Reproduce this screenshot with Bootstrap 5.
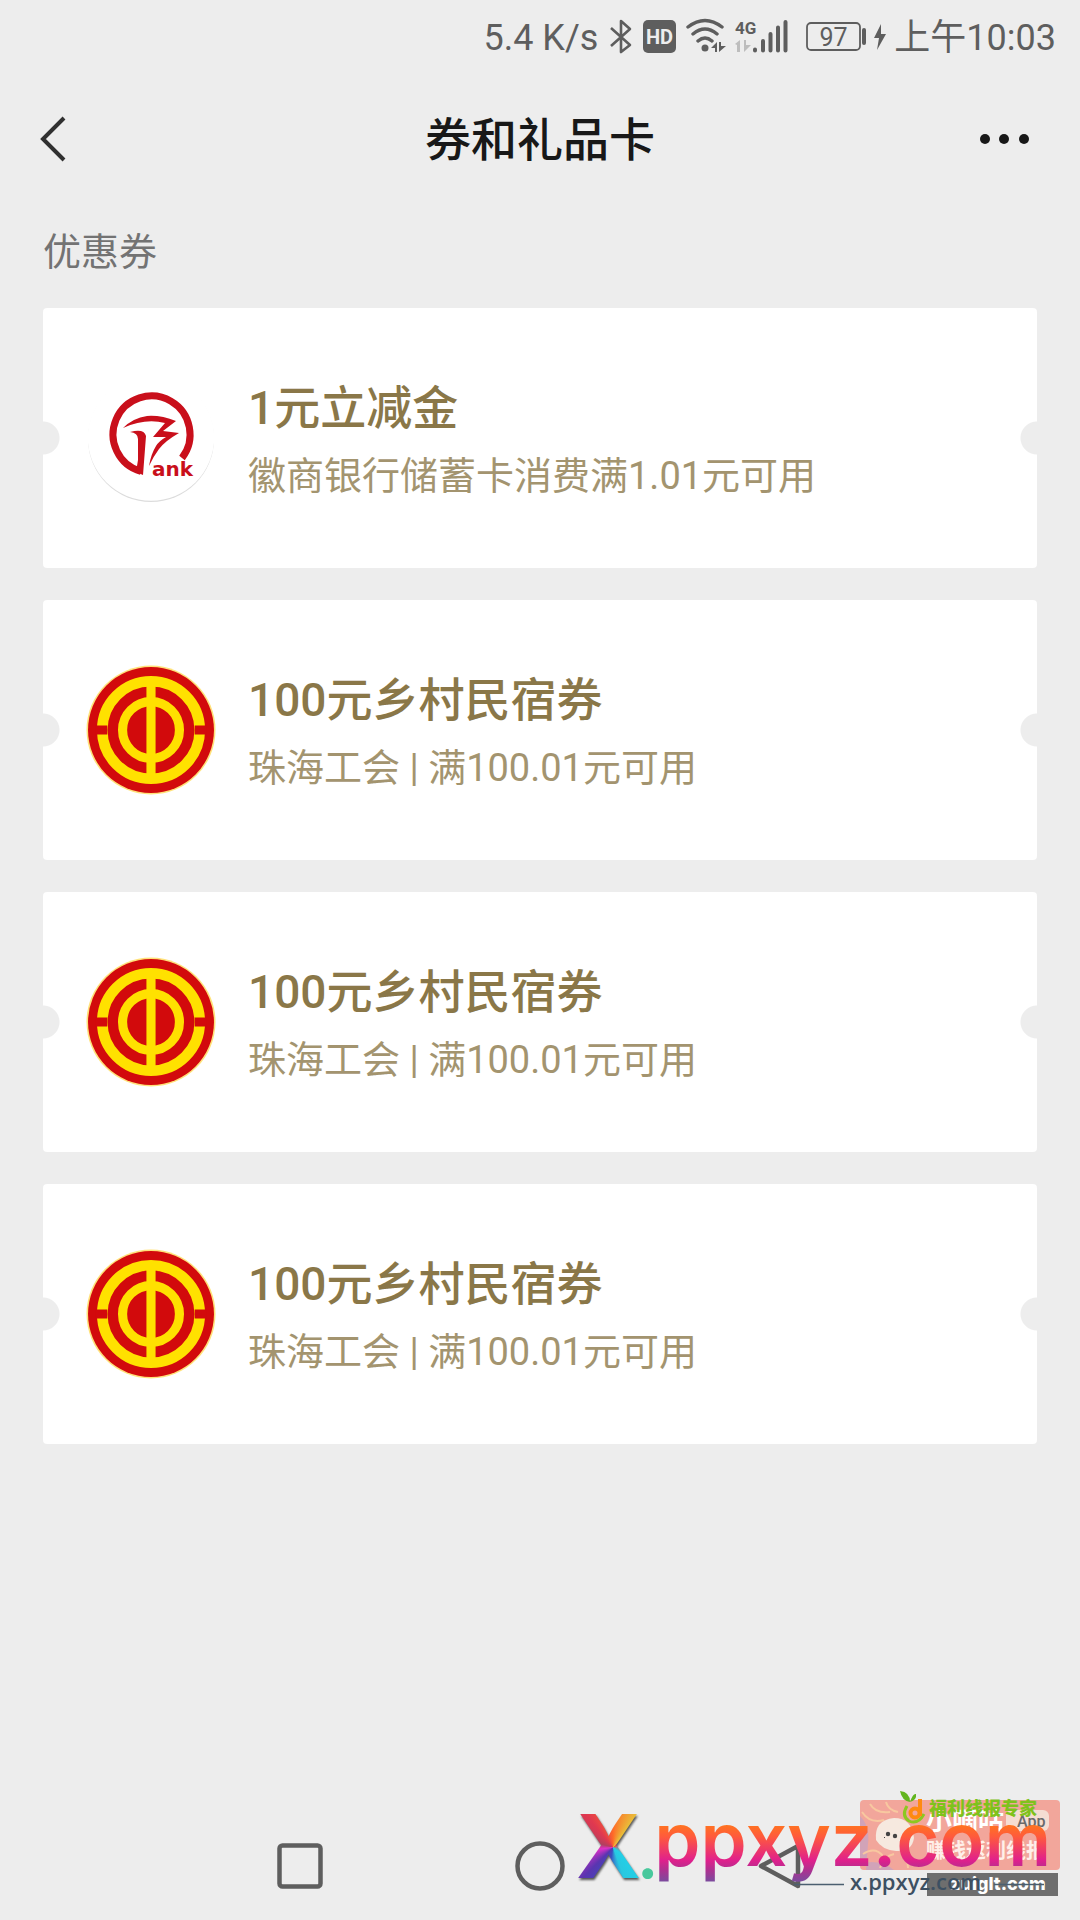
<!DOCTYPE html>
<html lang="zh-CN">
<head>
<meta charset="utf-8">
<meta name="viewport" content="width=device-width, initial-scale=1">
<title>券和礼品卡</title>
<link href="https://cdn.jsdelivr.net/npm/bootstrap@5.3.0/dist/css/bootstrap.min.css" rel="stylesheet">
<style>
  body { background: #ededed; font-family: Roboto, "Noto Sans CJK SC", sans-serif; color: #181818; }
  svg { display: block; flex-shrink: 0; }
  .screen { min-height: 100vh; }
  .status-bar { height: 74px; padding: 0 24px; color: #5e5e5e; font-size: 36px; line-height: 72px; }
  .status-bar span { padding-top: 2px; }
  .title-bar { height: 130px; padding: 0 40px; }
  .title-bar h1 { font-size: 46px; line-height: 64px; font-weight: 500; padding-top: 2px; }
  .bar-btn { width: 64px; height: 64px; padding: 0; border: 0; background: none; }
  .section-name { font-size: 38px; line-height: 48px; color: #737373; font-weight: 400; padding-top: 24px; margin-bottom: 32px; }
  .page-body { padding: 0 43px; }
  .coupon-list { gap: 32px; }
  .coupon {
    height: 260px; border-radius: 4px; padding: 0 43px; gap: 32px; color: #8a7748; background:
    radial-gradient(circle at 0 50%, #ededed 16px, #fff 17px) left / 50% 100% no-repeat,
    radial-gradient(circle at 100% 50%, #ededed 16px, #fff 17px) right / 50% 100% no-repeat;
  }
  .coupon-text { padding-top: 8px; line-height: 68px; }
  .coupon-title { font-size: 46px; font-weight: 500; }
  .coupon-note { font-size: 38px; color: #a3946f; }
  .nav-keys { height: 108px; }
  .watermark { right: 0; bottom: 0; width: 520px; height: 140px; pointer-events: none; }
  .wordmark { left: 16px; top: 0; font-family: Inter, sans-serif; font-weight: 700; line-height: 132px; white-space: nowrap; }
  .wordmark span { background-clip: text; -webkit-background-clip: text; color: transparent; }
  .mark-x { font-size: 88px; background-image: conic-gradient(from 0deg at 57% 51%, #ff6a28, #e8c23a 38deg, #ff4040 55deg, #22d0e8 130deg, #28c8e0 160deg, #3a4fc0 190deg, #5a35b0 225deg, #e030c8 262deg, #b04060 285deg, #e03850 320deg, #ff6a28); filter: drop-shadow(1px 2px 1px #555); }
  .wordmark .mark-dot { font-size: 64px; line-height: 150px; margin: 0 -4px; color: #48c89c; }
  .mark-rest { font-size: 74px; line-height: 118px; font-weight: 600; background-image: linear-gradient(#ff7420 38%, #ff5a3c 48%, #e0208c 68%, #b03090 76%, #7050a0 88%); }
</style>
<script src="https://cdn.jsdelivr.net/npm/bootstrap@5.3.0/dist/js/bootstrap.bundle.min.js"></script>
</head>
<body>
<svg width="0" height="0" class="position-absolute" aria-hidden="true">
  <symbol id="union" viewBox="0 0 128 128">
    <circle cx="64" cy="64" r="63.500" fill="#ffe27a"/>
    <circle cx="64" cy="64" r="62" fill="#d20a0c"/>
    <g fill="none" stroke="#ffe100">
      <circle cx="64" cy="64" r="48" stroke-width="10.500"/>
      <circle cx="64" cy="64" r="28" stroke-width="9"/>
    </g>
    <path d="M9 59.500h12v9H9zM107 59.500h12v9h-12z" fill="#d20a0c"/>
    <path d="M59.500 14h9v100h-9z" fill="#ffe100"/>
  </symbol>
</svg>

<div class="screen position-relative d-flex flex-column overflow-hidden">
  <div class="status-bar d-flex align-items-center justify-content-end">
    <span>5.4 K/s</span>
    <svg width="200" height="40" viewBox="0 0 200 40" class="ms-2" role="img" aria-label="蓝牙 HD WiFi 4G">
      <path d="M5 11 24 28 15 35V4l9 8L5 29" fill="none" stroke="#5e5e5e" stroke-width="2.600" stroke-linejoin="round"/>
      <rect x="37" y="3" width="33" height="33" rx="5" fill="#5e5e5e"/>
      <text x="53.500" y="27" text-anchor="middle" font-size="20" font-weight="700" fill="#ededed">HD</text>
      <g fill="none" stroke="#5e5e5e" stroke-width="3.400" stroke-linecap="round">
        <path d="M82 10q17-13 34 0M87 17q12-10 24 0M92 24q7-6 14 0"/>
      </g>
      <circle cx="99" cy="31" r="3.500" fill="#5e5e5e"/>
      <path d="M105 31l6-6v10h-2v-4zM113 25h2v4h5l-7 6z" fill="#5e5e5e"/>
      <text x="129" y="17" font-size="17" font-weight="700" fill="#5e5e5e" font-family="Roboto">4G</text>
      <path d="M129 27l5-4v12h-3v-7zM138 23h2v5h5l-7 7z" fill="#bdbdbd"/>
      <path d="M149 32.500v1M157 24v9.500M164.500 17v16.500M172 10.500v23M179.500 5v28.500" stroke="#5e5e5e" stroke-width="4" stroke-linecap="round"/>
    </svg>
    <svg width="84" height="40" viewBox="0 0 84 40" class="me-1" role="img" aria-label="电量 97">
      <rect x="1" y="6" width="53" height="27" rx="4" fill="none" stroke="#5e5e5e" stroke-width="1.800"/>
      <text x="27.500" y="28.500" text-anchor="middle" font-size="25" fill="#5e5e5e">97</text>
      <path d="M58 13v13" stroke="#5e5e5e" stroke-width="4" stroke-linecap="round"/>
      <path d="M75 7 68 21h5l-2 12 9-16h-5z" fill="#5e5e5e"/>
    </svg>
    <span>上午10:03</span>
  </div>

  <header class="title-bar d-flex align-items-center justify-content-between">
    <button class="bar-btn" aria-label="返回">
      <svg width="28" height="48" viewBox="0 0 28 48"><path d="M24 3 3 24l21 21" fill="none" stroke="#303030" stroke-width="4"/></svg>
    </button>
    <h1 class="m-0">券和礼品卡</h1>
    <button class="bar-btn d-flex align-items-center justify-content-end" aria-label="更多">
      <svg width="62" height="12" viewBox="8 0 62 12" fill="#181818"><circle cx="15" cy="6" r="5"/><circle cx="34" cy="6" r="5"/><circle cx="54" cy="6" r="5"/></svg>
    </button>
  </header>

  <main class="page-body">
    <h2 class="section-name">优惠券</h2>
    <div class="coupon-list d-flex flex-column">
      <a href="#" class="coupon d-flex align-items-center text-decoration-none">
        <svg width="130" height="130" viewBox="0 0 130 130" role="img" aria-label="徽商银行">
          <circle cx="65" cy="66" r="63" fill="#dcdcdc"/>
          <circle cx="65" cy="64.500" r="63.200" fill="#fff"/>
          <path d="M96 85A38.500 38.500 0 1 0 55 98.500" fill="none" stroke="#c90f1b" stroke-width="7"/>
          <path d="M44 59q14-4 16 4l-3 39-7-3 2-12V66q0-6-8-7z" fill="#c90f1b"/>
          <path d="M37 55q10-10 24-12 14-1 29 5L77 58l16 2q-14 8-20 16-6 8-10 17 2-12 7-20 3-5 10-9l-13 0 12-14q-20-5-42 5z" fill="#c90f1b"/>
          <text x="66" y="103" font-family="DejaVu Sans" font-size="20" font-weight="700" fill="#c90f1b">ank</text>
        </svg>
        <div class="coupon-text"><div class="coupon-title">1元立减金</div><div class="coupon-note">徽商银行储蓄卡消费满1.01元可用</div></div>
      </a>
      <a href="#" class="coupon d-flex align-items-center text-decoration-none">
        <svg width="130" height="130" role="img" aria-label="工会"><use href="#union"/></svg>
        <div class="coupon-text"><div class="coupon-title">100元乡村民宿券</div><div class="coupon-note">珠海工会 | 满100.01元可用</div></div>
      </a>
      <a href="#" class="coupon d-flex align-items-center text-decoration-none">
        <svg width="130" height="130" role="img" aria-label="工会"><use href="#union"/></svg>
        <div class="coupon-text"><div class="coupon-title">100元乡村民宿券</div><div class="coupon-note">珠海工会 | 满100.01元可用</div></div>
      </a>
      <a href="#" class="coupon d-flex align-items-center text-decoration-none">
        <svg width="130" height="130" role="img" aria-label="工会"><use href="#union"/></svg>
        <div class="coupon-text"><div class="coupon-title">100元乡村民宿券</div><div class="coupon-note">珠海工会 | 满100.01元可用</div></div>
      </a>
    </div>
  </main>

  <nav class="nav-keys row g-0 mt-auto justify-content-center align-items-center">
    <div class="col-8 d-flex">
      <button class="bar-btn flex-fill d-flex justify-content-center align-items-center" aria-label="最近任务"><svg width="48" height="48"><rect x="3.500" y="3.500" width="41" height="41" rx="3" fill="none" stroke="#5e5e5e" stroke-width="4.500"/></svg></button>
      <button class="bar-btn flex-fill d-flex justify-content-center align-items-center" aria-label="主屏幕"><svg width="50" height="50"><circle cx="25" cy="25" r="22.500" fill="none" stroke="#5e5e5e" stroke-width="4.500"/></svg></button>
      <button class="bar-btn flex-fill d-flex justify-content-center align-items-center" aria-label="返回"><svg width="48" height="48"><path d="M42 4v40L5 24z" fill="none" stroke="#5e5e5e" stroke-width="4.500" stroke-linejoin="round"/></svg></button>
    </div>
  </nav>

  <div class="watermark position-absolute">
    <svg width="520" height="140" viewBox="0 0 520 140">
      <rect x="300" y="20" width="200" height="70" rx="4" fill="#f2a69b"/>
      <path d="M300 36q10 10 8 28l-2 26h28q-16-12-34-6z" fill="#c3a3c4" opacity=".7"/>
      <path d="M302 32q8 12 22 8M310 24q6 10 20 8M326 22q2 8 12 10M303 74q12-8 20 2M320 88q4-12 14-14M342 76q6 2 6 12" fill="none" stroke="#f8c8a0" stroke-width="2"/>
      <path d="M316 60q-2-20 18-22 18 0 20 20-2 14-18 13-14-1-20-11z" fill="#f6e9df"/>
      <circle cx="328" cy="54" r="2.200" fill="#444"/><circle cx="335" cy="56" r="2.200" fill="#444"/><path d="M324 57l1 1" stroke="#444"/>
      <text x="366" y="50" font-size="26" font-weight="700" fill="#fff">小嘀咕</text>
      <rect x="446" y="30" width="43" height="21" rx="6" fill="#f5ddd2"/>
      <text x="457" y="47" font-size="16" font-weight="500" fill="#6b6b6b">App</text>
      <text x="366" y="78" font-size="20" font-weight="700" fill="#fff0ea">赚钱返利线报</text>
      <path d="M347 26q-6 10 2 15 9 4 15-7" stroke="#8cc820" stroke-width="3" fill="none"/>
      <circle cx="355" cy="33" r="4.500" fill="none" stroke="#ff8a10" stroke-width="4"/><path d="M360 19v17" stroke="#ff8a10" stroke-width="4"/>
      <path d="M350 22q-8-1-10-11 10 1 10 11 3-9 6-8 1 6-6 8z" fill="#62b51e"/>
      <text x="369" y="35" font-size="18" font-weight="900" fill="#7fc21c">福利线报专家</text>
      <rect x="367" y="93" width="131" height="23" fill="#6e6e6e"/>
      <text x="390" y="110" font-family="Inter" font-size="18" font-weight="800" fill="#fff">zuiglt.com</text>
      <path d="M234 104.500h50M434 104.500h50" stroke="#4b5f70" stroke-width="1.600"/>
    </svg>
    <div class="wordmark position-absolute d-flex align-items-start"><span class="mark-x">X</span><span class="mark-dot">.</span><span class="mark-rest">ppxyz.com</span></div>
    <svg width="520" height="140" viewBox="0 0 520 140" class="position-absolute top-0 start-0">
      <text x="290" y="110" font-family="Open Sans" font-size="22" font-weight="600" fill="#3d5062">x.ppxyz.com</text>
    </svg>
  </div>
</div>
</body>
</html>
